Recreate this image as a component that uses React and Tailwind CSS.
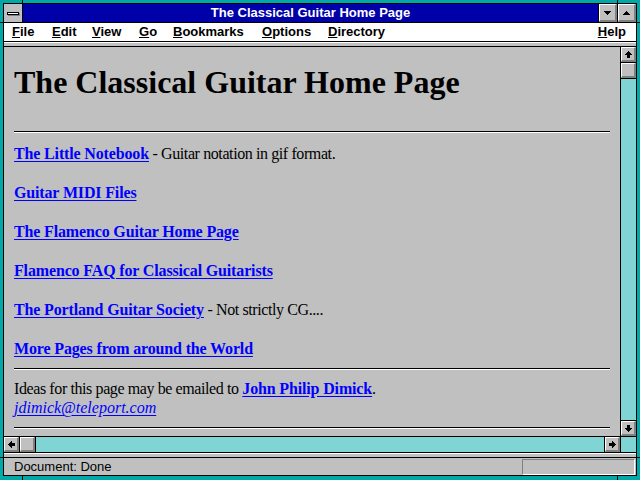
import React from 'react';

const dither = 'bg-[#80d4d4]';

// little pixel arrow used on the scroll buttons
const Arrow = ({ dir }) => {
  const rot = {
    up: '',
    right: 'rotate-90',
    down: 'rotate-180',
    left: '-rotate-90',
  }[dir];
  return (
    <svg width="7" height="7" viewBox="0 0 7 7" className={rot} shapeRendering="crispEdges">
      <rect x="3" y="0" width="1" height="1" fill="black" />
      <rect x="2" y="1" width="3" height="1" fill="black" />
      <rect x="1" y="2" width="5" height="1" fill="black" />
      <rect x="0" y="3" width="7" height="1" fill="black" />
      <rect x="2" y="4" width="3" height="3" fill="black" />
    </svg>
  );
};

const Tri = ({ up }) => (
  <svg width="7" height="4" viewBox="0 0 7 4" className={up ? 'rotate-180' : ''} shapeRendering="crispEdges">
    <rect x="0" y="0" width="7" height="1" fill="black" />
    <rect x="1" y="1" width="5" height="1" fill="black" />
    <rect x="2" y="2" width="3" height="1" fill="black" />
    <rect x="3" y="3" width="1" height="1" fill="black" />
  </svg>
);

const Btn = ({ className = '', children }) => (
  <div
    className={`flex items-center justify-center bg-[#c0c0c0] border-t border-l border-white border-r-2 border-b-2 border-r-[#808080] border-b-[#808080] ${className}`}
  >
    {children}
  </div>
);

const Hr = ({ className = '' }) => (
  <div className={`h-[2px] border-t border-t-black border-b border-b-white ${className}`} />
);

const menu = [
  ['F', 'ile', 'w-[40px]'],
  ['E', 'dit', 'w-[40px]'],
  ['V', 'iew', 'w-[47px]'],
  ['G', 'o', 'w-[34px]'],
  ['B', 'ookmarks', 'w-[89px]'],
  ['O', 'ptions', 'w-[66px]'],
  ['D', 'irectory', 'w-[80px]'],
];

const links = [
  ['The Little Notebook', ' - Guitar notation in gif format.'],
  ['Guitar MIDI Files', ''],
  ['The Flamenco Guitar Home Page', ''],
  ['Flamenco FAQ for Classical Guitarists', ''],
  ['The Portland Guitar Society', ' - Not strictly CG....'],
  ['More Pages from around the World', ''],
];

const link = 'font-bold text-[#0000ff] underline underline-offset-[2px] tracking-[-0.15px]';

const App = () => {
  return (
    <div className="relative w-[640px] h-[480px] bg-[#00a8a8] pt-[3px] px-[3px] pb-[4px] overflow-hidden">
      {/* frame corner notches */}
      <div className="absolute left-[22px] top-0 w-px h-[3px] bg-black" />
      <div className="absolute left-[617px] top-0 w-px h-[3px] bg-black" />
      <div className="absolute left-[22px] bottom-0 w-px h-[4px] bg-black" />
      <div className="absolute left-[617px] bottom-0 w-px h-[4px] bg-black" />
      <div className="absolute left-0 top-[22px] w-[3px] h-px bg-black" />
      <div className="absolute right-0 top-[22px] w-[3px] h-px bg-black" />
      <div className="absolute left-0 top-[457px] w-[3px] h-px bg-black" />
      <div className="absolute right-0 top-[457px] w-[3px] h-px bg-black" />

      <div className="flex flex-col h-full border border-black bg-[#c0c0c0] font-['Liberation_Sans',Arial,sans-serif] text-[13px]">
        {/* title bar */}
        <div className="flex h-[19px] border-b border-black">
          <div className="w-[19px] h-[18px] border-r border-black bg-[#c0c0c0] flex items-center justify-center">
            <div className="w-[12px] h-[3px] bg-white border border-black shadow-[1px_1px_0_#808080]" />
          </div>
          <div className="flex-1 bg-[#0000a8] text-white font-bold text-center leading-[18px]">
            The Classical Guitar Home Page
          </div>
          <div className="w-[19px] h-[18px] border-l border-black">
            <Btn className="h-full">
              <Tri />
            </Btn>
          </div>
          <div className="w-[19px] h-[18px] border-l border-black">
            <Btn className="h-full">
              <Tri up />
            </Btn>
          </div>
        </div>

        {/* menu bar */}
        <div className="flex h-[19px] bg-white border-b border-black pl-[8px] pr-[10px] font-bold leading-[18px] text-black">
          {menu.map(([k, rest, w]) => (
            <div key={k + rest} className={w}>
              <span className="underline underline-offset-[1px]">{k}</span>
              {rest}
            </div>
          ))}
          <div className="ml-auto">
            <span className="underline underline-offset-[1px]">H</span>elp
          </div>
        </div>

        {/* thin toolbar strip */}
        <div className="h-[5px] border-t border-white border-b border-b-black bg-[#c0c0c0]" />

        {/* main area */}
        <div className="flex h-[389px]">
          <div className="flex-1 overflow-hidden px-[10px] font-['Liberation_Serif','Times_New_Roman',serif] text-black text-[16px] leading-[19px] tracking-[-0.4px]">
            <h1 className="mt-[17px] font-bold text-[32px] leading-[37px] tracking-normal">
              The Classical Guitar Home Page
            </h1>
            <Hr className="mt-[30px]" />
            {links.map(([t, rest], i) => (
              <p key={t} className={i === 0 ? 'mt-[11px]' : 'mt-[20px]'}>
                <a className={link}>{t}</a>
                {rest}
              </p>
            ))}
            <Hr className="mt-[10px]" />
            <div className="mt-[9px] leading-[19px]">
              Ideas for this page may be emailed to{' '}
              <a className={link}>John Philip Dimick</a>.
              <br />
              <a className="italic text-[#0000ff] underline underline-offset-[2px] tracking-normal">jdimick@teleport.com</a>
            </div>
            <Hr className="mt-[10px]" />
          </div>

          {/* vertical scrollbar */}
          <div className="w-[16px] border-l border-black flex flex-col">
            <div className="h-[16px] border-b border-black">
              <Btn className="h-full">
                <Arrow dir="up" />
              </Btn>
            </div>
            <div className="h-[16px] border-b border-black">
              <Btn className="h-full" />
            </div>
            <div className={`flex-1 ${dither}`} />
            <div className="h-[16px] border-t border-black">
              <Btn className="h-full">
                <Arrow dir="down" />
              </Btn>
            </div>
          </div>
        </div>

        {/* horizontal scrollbar */}
        <div className="flex h-[17px] border-t border-b border-black">
          <div className="w-[16px] border-r border-black">
            <Btn className="h-full">
              <Arrow dir="left" />
            </Btn>
          </div>
          <div className="w-[16px] border-r border-black">
            <Btn className="h-full" />
          </div>
          <div className={`flex-1 ${dither}`} />
          <div className="w-[16px] border-l border-black">
            <Btn className="h-full">
              <Arrow dir="right" />
            </Btn>
          </div>
          <div className={`w-[16px] border-l border-black ${dither}`} />
        </div>

        <div className="h-[5px] border-t border-white border-b border-b-black bg-[#c0c0c0]" />

        {/* status bar */}
        <div className="flex h-[17px] items-start">
          <div className="pl-[10px] leading-[17px] text-black">Document: Done</div>
          <div className="ml-auto mr-px mt-px w-[113px] h-[16px] border-t border-l border-[#808080] border-r border-b border-r-white border-b-white" />
        </div>
      </div>
    </div>
  );
};

export default App;
